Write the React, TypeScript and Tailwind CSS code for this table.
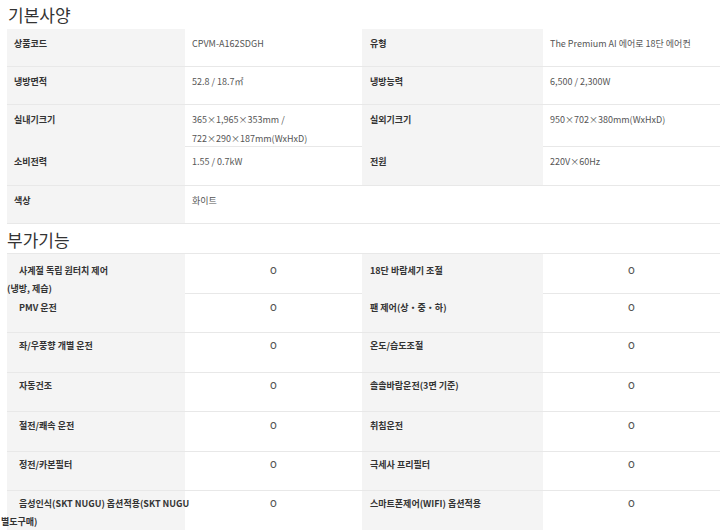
import React from "react";

const specRows: { cells: [string, React.ReactNode, string?, React.ReactNode?]; h: string }[] = [
  { cells: ["상품코드", "CPVM-A162SDGH", "유형", "The Premium AI 에어로 18단 에어컨"], h: "h-[38px]" },
  { cells: ["냉방면적", "52.8 / 18.7㎡", "냉방능력", "6,500 / 2,300W"], h: "h-[38px]" },
  {
    cells: [
      "실내기크기",
      <>
        365×1,965×353mm /
        <br />
        722×290×187mm(WxHxD)
      </>,
      "실외기크기",
      "950×702×380mm(WxHxD)",
    ],
    h: "h-[42px]",
  },
  { cells: ["소비전력", "1.55 / 0.7kW", "전원", "220V×60Hz"], h: "h-[39px]" },
];

const featRows: { l: React.ReactNode; r: string; h: string; pt: string }[] = [
  {
    l: (
      <>
        사계절 독립 원터치 제어
        <br />
        <span className="ml-[6px]">(냉방, 제습)</span>
      </>
    ),
    r: "18단 바람세기 조절",
    h: "h-[40px]",
    pt: "pt-[8px]",
  },
  { l: "PMV 운전", r: "팬 제어(상・중・하)", h: "h-[39px]", pt: "pt-[5px]" },
  { l: "좌/우풍향 개별 운전", r: "온도/습도조절", h: "h-[40px]", pt: "pt-[4px]" },
  { l: "자동건조", r: "솔솔바람운전(3면 기준)", h: "h-[39px]", pt: "pt-[4px]" },
  { l: "절전/쾌속 운전", r: "취침운전", h: "h-[40px]", pt: "pt-[5px]" },
  { l: "정전/카본필터", r: "극세사 프리필터", h: "h-[39px]", pt: "pt-[4px]" },
  {
    l: (
      <>
        음성인식(SKT NUGU) 옵션적용(SKT NUGU
        <br />
        별도구매)
      </>
    ),
    r: "스마트폰제어(WIFI) 옵션적용",
    h: "h-[40px]",
    pt: "pt-[4px]",
  },
];

export default function App() {
  return (
    <div className="w-[725px] h-[530px] overflow-hidden bg-white font-['Noto_Sans_CJK_KR','Noto_Sans',sans-serif]">
      <h2 className="h-[29px] pl-[8px] pt-[2px] text-[17px] leading-[26px] text-[#333]">기본사양</h2>
      <div className="ml-[7px] w-[713px]">
        {specRows.map((row, i) => (
          <div
            key={i}
            className={`grid grid-cols-[178px_177px_181px_177px] border-b border-[#e8e8e8] ${row.h} text-[9px] leading-[19px]`}
          >
            <div className="bg-[#f4f4f4] pl-[7px] pt-[5px] font-bold text-[#333]">{row.cells[0]}</div>
            <div className="pl-[7px] pt-[5px] text-[#555]">{row.cells[1]}</div>
            <div className="bg-[#f4f4f4] pl-[8px] pt-[5px] font-bold text-[#333]">{row.cells[2]}</div>
            <div className="pl-[7px] pt-[5px] text-[#555]">{row.cells[3]}</div>
          </div>
        ))}
        <div className="grid h-[38px] grid-cols-[178px_535px] border-b border-[#e8e8e8] text-[9px] leading-[19px]">
          <div className="bg-[#f4f4f4] pl-[7px] pt-[5px] font-bold text-[#333]">색상</div>
          <div className="pl-[7px] pt-[5px] text-[#555]">화이트</div>
        </div>
      </div>
      <h2 className="h-[29px] pl-[7px] pt-[5px] text-[17px] leading-[22px] text-[#333]">부가기능</h2>
      <div className="ml-[7px] w-[713px] border-t border-[#e8e8e8]">
        {featRows.map((row, i) => (
          <div
            key={i}
            className={`grid grid-cols-[178px_177px_181px_177px] border-b border-[#e8e8e8] ${row.h} text-[9px] leading-[18px]`}
          >
            <div className={`bg-[#f4f4f4] ${row.pt} font-bold text-[#333]`}>
              <p className="-ml-[6px] indent-[18px] whitespace-nowrap">{row.l}</p>
            </div>
            <div className={`${row.pt} text-center font-medium text-[#555]`}>O</div>
            <div className={`bg-[#f4f4f4] pl-[8px] ${row.pt} font-bold text-[#333]`}>{row.r}</div>
            <div className={`${row.pt} text-center font-medium text-[#555]`}>O</div>
          </div>
        ))}
      </div>
    </div>
  );
}
